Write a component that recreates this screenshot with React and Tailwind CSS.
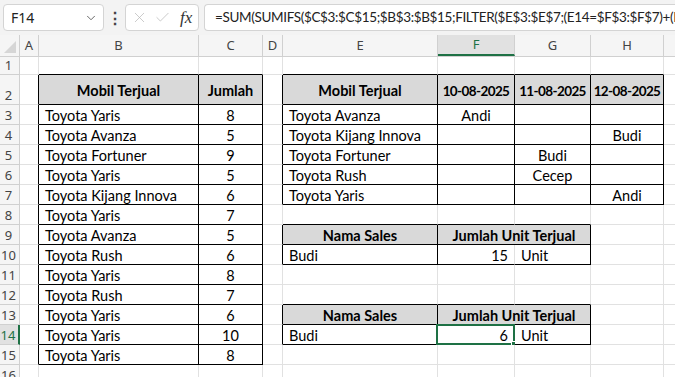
import { ChevronDown, X, Check } from "lucide-react";

const COLS = [
  { id: "A", w: "w-[19px]" },
  { id: "B", w: "w-[160px]" },
  { id: "C", w: "w-[64px]" },
  { id: "D", w: "w-[20px]" },
  { id: "E", w: "w-[155px]" },
  { id: "F", w: "w-[77px]" },
  { id: "G", w: "w-[76px]" },
  { id: "H", w: "w-[73px]" },
  { id: "I", w: "w-[64px]" },
];

const ROWS = [1, 2, 3, 4, 5, 6, 7, 8, 9, 10, 11, 12, 13, 14, 15, 16];

const mobil = [
  ["Toyota Yaris", 8],
  ["Toyota Avanza", 5],
  ["Toyota Fortuner", 9],
  ["Toyota Yaris", 5],
  ["Toyota Kijang Innova", 6],
  ["Toyota Yaris", 7],
  ["Toyota Avanza", 5],
  ["Toyota Rush", 6],
  ["Toyota Yaris", 8],
  ["Toyota Rush", 7],
  ["Toyota Yaris", 6],
  ["Toyota Yaris", 10],
  ["Toyota Yaris", 8],
];

// isi sel: v = nilai, a = align, h = header abu-abu, d = tanggal (angka dirapatkan)
const cells = {
  B2: { v: "Mobil Terjual", a: "c", h: true },
  C2: { v: "Jumlah", a: "c", h: true },
  E2: { v: "Mobil Terjual", a: "c", h: true },
  F2: { v: "10-08-2025", a: "c", h: true, d: true },
  G2: { v: "11-08-2025", a: "c", h: true, d: true },
  H2: { v: "12-08-2025", a: "c", h: true, d: true },
  E3: { v: "Toyota Avanza" },
  F3: { v: "Andi", a: "c" },
  E4: { v: "Toyota Kijang Innova" },
  H4: { v: "Budi", a: "c" },
  E5: { v: "Toyota Fortuner" },
  G5: { v: "Budi", a: "c" },
  E6: { v: "Toyota Rush" },
  G6: { v: "Cecep", a: "c" },
  E7: { v: "Toyota Yaris" },
  H7: { v: "Andi", a: "c" },
  E9: { v: "Nama Sales", a: "c", h: true },
  F9: { v: "Jumlah Unit Terjual", a: "c", h: true, merge: true },
  E10: { v: "Budi" },
  F10: { v: "15", a: "r" },
  G10: { v: "Unit" },
  E13: { v: "Nama Sales", a: "c", h: true },
  F13: { v: "Jumlah Unit Terjual", a: "c", h: true, merge: true },
  E14: { v: "Budi" },
  F14: { v: "6", a: "r" },
  G14: { v: "Unit" },
};
mobil.forEach(([nama, jml], i) => {
  cells["B" + (i + 3)] = { v: nama };
  cells["C" + (i + 3)] = { v: String(jml), a: "c" };
});

const tables = [
  { c1: 1, c2: 2, r1: 2, r2: 15 },
  { c1: 4, c2: 7, r1: 2, r2: 7 },
  { c1: 4, c2: 6, r1: 9, r2: 10 },
  { c1: 4, c2: 6, r1: 13, r2: 14 },
];
const softRight = ["F10", "F14"];

const inTable = (c, r) =>
  tables.some((t) => c >= t.c1 && c <= t.c2 && r >= t.r1 && r <= t.r2);

const rowHeight = (r) => (r === 1 ? "h-[18px]" : r === 2 ? "h-[30px]" : "h-[20px]");

function Cell({ ci, r }) {
  const col = COLS[ci];
  const ref = col.id + r;
  const cell = cells[ref];
  const prev = ci > 0 ? cells[COLS[ci - 1].id + r] : null;
  if (prev && prev.merge) return null;

  const nextCi = cell && cell.merge ? ci + 1 : ci;
  const rightBlack =
    !softRight.includes(ref) && (inTable(ci, r) || inTable(nextCi + 1, r));
  const bottomBlack = inTable(ci, r) || inTable(ci, r + 1);
  const selected = ref === "F14";

  const align =
    cell?.a === "c" ? "justify-center" : cell?.a === "r" ? "justify-end pr-[6px]" : "justify-start pl-[6px]";

  return (
    <div
      className={`relative flex shrink-0 items-end border-r border-b ${
        cell?.merge ? "w-[153px]" : col.w
      } ${rightBlack ? "border-r-black" : "border-r-[#e1e1e1]"} ${
        bottomBlack ? "border-b-black" : "border-b-[#e1e1e1]"
      } ${cell?.h ? "bg-[#d9d9d9] font-bold" : "bg-white"} ${align} ${
        r === 2 ? "pb-[5px]" : "pb-0"
      }`}
    >
      {cell && (
        <span
          className={`whitespace-nowrap leading-[16px] ${
            cell.d ? "text-[13.5px] tracking-[-0.6px]" : ""
          }`}
        >
          {cell.v}
        </span>
      )}
      {selected && (
        <div className="absolute -top-px -left-[2px] -right-px -bottom-px border-2 border-[#1e7145]">
          <div className="absolute -right-[4px] -bottom-[4px] h-[6px] w-[6px] border border-white bg-[#1e7145]" />
        </div>
      )}
    </div>
  );
}

export default function App() {
  const formula =
    "=SUM(SUMIFS($C$3:$C$15;$B$3:$B$15;FILTER($E$3:$E$7;(E14=$F$3:$F$7)+(E14=$G$3:$G$7)+(E14=$H$3:$H$7))))";

  return (
    <div className="h-[377px] w-[675px] overflow-hidden bg-white font-['Noto_Sans',sans-serif]">
      {/* formula bar */}
      <div className="flex h-[35px] items-start bg-[#f3f3f3] pl-[3px] pt-[4px]">
        <div className="flex h-[27px] w-[101px] shrink-0 items-center justify-between rounded-[4px] border border-[#d4d4d4] bg-white pl-[7px] pr-[5px] text-[14px] text-[#222]">
          <span>F14</span>
          <ChevronDown size={14} strokeWidth={1.5} className="text-[#555]" />
        </div>
        <div className="flex h-[27px] w-[21px] shrink-0 items-center justify-center text-[16px] font-bold text-[#444]">
          ⋮
        </div>
        <div className="flex h-[27px] w-[74px] shrink-0 items-center gap-[6px] rounded-[4px] border border-[#d4d4d4] bg-white pl-[5px]">
          <X size={17} strokeWidth={1} className="text-[#b5b5b5]" />
          <Check size={17} strokeWidth={1} className="text-[#b5b5b5]" />
          <span className="ml-[3px] font-['Liberation_Serif',serif] text-[17px] italic text-[#333]">fx</span>
        </div>
        <div className="ml-[5px] flex h-[27px] min-w-0 flex-1 items-center overflow-hidden rounded-l-[4px] border border-r-0 border-[#d4d4d4] bg-white pl-[10px]">
          <span className="whitespace-nowrap font-['Lato',sans-serif] text-[13.5px] tracking-[-0.35px] text-[#222]">
            {formula}
          </span>
        </div>
      </div>

      {/* column headers */}
      <div className="flex h-[22px] border-b border-[#d0d0d0] bg-[#f5f5f5] text-[13px] text-[#444]">
        <div className="relative w-[20px] shrink-0 border-r border-[#d0d0d0]">
          <svg className="absolute bottom-[3px] right-[3px]" width="12" height="12" viewBox="0 0 12 12">
            <polygon points="12,0 12,12 0,12" fill="#d6d6d6" />
          </svg>
        </div>
        {COLS.map((c) =>
          c.id === "F" ? (
            <div
              key={c.id}
              className={`${c.w} flex shrink-0 items-center justify-center border-r border-b-2 border-r-[#d0d0d0] border-b-[#1e7145] bg-[#e1e1e1] text-[#1e7145]`}
            >
              {c.id}
            </div>
          ) : (
            <div
              key={c.id}
              className={`${c.w} flex shrink-0 items-center justify-center border-r border-[#d0d0d0]`}
            >
              {c.id}
            </div>
          )
        )}
      </div>

      {/* grid */}
      <div className="font-['Lato',sans-serif] text-[14.5px] text-black">
        {ROWS.map((r) => (
          <div key={r} className={`flex ${rowHeight(r)}`}>
            {r === 14 ? (
              <div className="flex w-[20px] shrink-0 items-end justify-center border-r-2 border-b border-r-[#1e7145] border-b-[#d0d0d0] bg-[#e1e1e1] pr-[2px] font-['Noto_Sans',sans-serif] text-[13px] leading-[17px] text-[#1e7145]">
                {r}
              </div>
            ) : (
              <div className="flex w-[20px] shrink-0 items-end justify-center border-r border-b border-[#d0d0d0] bg-[#f5f5f5] pr-[2px] font-['Noto_Sans',sans-serif] text-[13px] leading-[17px] text-[#444]">
                {r}
              </div>
            )}
            {COLS.map((c, ci) => (
              <Cell key={c.id} ci={ci} r={r} />
            ))}
          </div>
        ))}
      </div>
    </div>
  );
}
